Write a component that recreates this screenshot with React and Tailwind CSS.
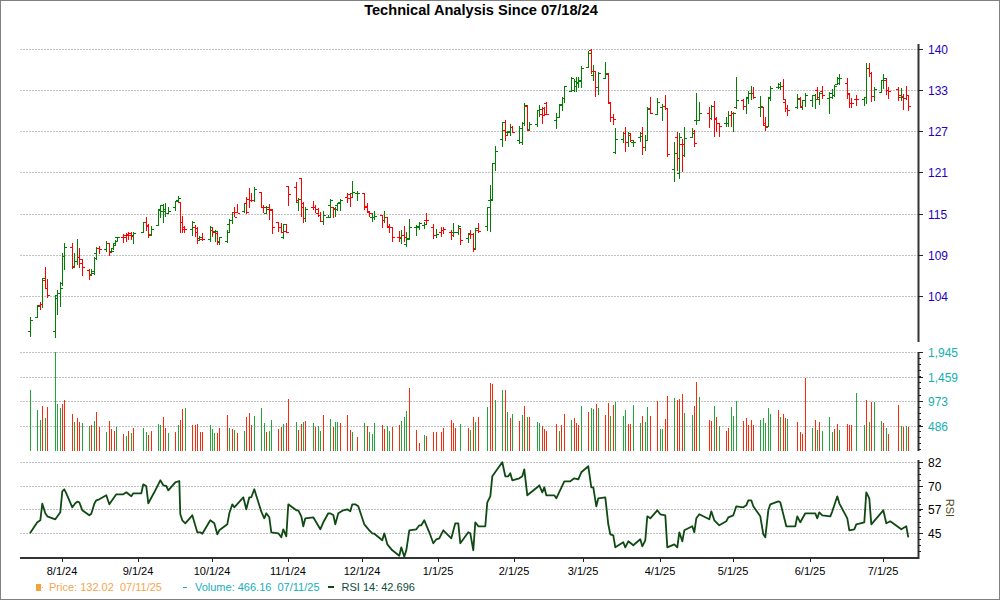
const priceA = [
  [91,952,1010,994,961,'g'],[112,915,950,950,918,'g'],[121,905,930,915,912,'r'],[127,835,924,912,835,'g'],[136,802,868,840,865,'r'],[142,838,895,865,884,'r'],
  [166,885,1013,994,885,'g'],[172,870,945,895,880,'g'],[181,845,922,880,865,'g'],[187,758,858,850,768,'g'],[193,728,810,768,742,'g'],
  [217,728,808,742,800,'r'],[223,760,805,798,782,'g'],[232,718,795,782,772,'g'],[238,745,805,772,788,'r'],[247,778,827,778,802,'r'],
  [268,808,840,810,825,'r'],[274,808,828,822,812,'g'],[283,770,825,820,775,'g'],[289,742,780,760,745,'g'],[298,738,762,745,748,'r'],
  [319,722,755,748,730,'g'],[328,728,768,730,755,'r'],[334,748,760,752,752,'g'],[340,733,750,745,735,'g'],[346,720,738,728,722,'g'],[352,710,725,712,712,'g'],
  [370,702,728,712,712,'r'],[379,700,725,706,705,'r'],[385,697,720,702,700,'r'],[394,695,720,706,708,'r'],[400,695,732,706,700,'g'],
  [430,665,697,697,665,'g'],[439,650,692,665,678,'r'],[445,672,715,675,703,'r'],[454,678,708,705,686,'g'],
  [475,628,678,674,630,'g'],[481,615,653,628,615,'g'],[490,612,668,632,628,'g'],[496,610,650,632,640,'g'],[505,620,640,640,632,'g'],
  [526,603,632,620,603,'g'],[535,587,610,600,595,'g'],[541,605,700,605,665,'r'],[547,648,700,665,680,'r'],[553,678,700,688,688,'r'],
  [577,663,708,688,665,'g'],[586,675,712,680,685,'r'],[592,680,732,695,715,'r'],[598,708,722,720,710,'g'],[607,698,722,718,718,'r'],
  [631,678,725,716,680,'g'],[637,680,710,690,695,'r'],[646,690,725,692,692,'g'],[652,695,735,700,725,'r'],[658,710,735,722,712,'g'],
  [682,690,730,722,695,'g'],[688,658,695,672,660,'g'],[697,635,672,660,635,'g'],[703,622,652,635,650,'r'],[712,612,640,635,638,'r'],
  [733,608,640,632,610,'g'],[739,590,642,610,636,'r'],[748,565,625,598,600,'r'],[754,578,605,600,600,'r'],[763,560,605,600,568,'g'],
  [784,577,625,577,622,'r'],[790,615,640,620,622,'r'],[799,618,640,638,620,'g'],[808,612,660,628,628,'r'],[815,628,702,630,680,'r'],
  [835,665,695,666,680,'r'],[844,670,700,680,697,'r'],[850,672,716,712,672,'g'],[859,672,700,692,697,'r'],
  [865,558,618,558,582,'r'],[889,545,605,562,600,'r'],[895,595,632,605,598,'g'],[904,535,650,535,622,'r'],[910,605,670,610,655,'r'],[916,620,665,655,628,'g'],
  [940,602,630,620,622,'r'],[946,615,638,622,628,'r'],[955,625,650,640,645,'r'],[961,635,665,645,662,'r'],[970,632,675,662,645,'g'],[985,645,652,650,650,'g'],
]
const priceB = [
  [0,598,652,615,600,'g'],[10,622,655,622,625,'r'],[16,620,650,628,628,'g'],[22,608,632,615,610,'g'],[31,598,632,605,600,'g'],
  [52,580,608,592,582,'r'],[61,578,620,595,590,'r'],[67,543,590,578,575,'g'],[82,572,602,580,578,'g'],
  [103,580,630,580,622,'r'],[112,610,640,618,632,'r'],[118,632,650,635,640,'r'],[127,638,665,652,652,'g'],[133,632,660,650,648,'g'],
  [157,645,685,645,660,'r'],[163,632,668,660,650,'g'],[172,650,685,652,678,'r'],[178,672,698,680,682,'r'],[187,680,725,682,712,'r'],
  [208,692,725,712,712,'r'],[214,690,732,715,705,'g'],[223,678,725,705,712,'r'],[229,695,742,732,718,'g'],[238,658,720,715,680,'g'],
  [259,675,708,680,678,'g'],[268,665,690,680,668,'g'],[283,665,688,675,672,'g'],[289,640,672,660,660,'r'],
  [310,672,718,680,705,'r'],[319,688,715,705,702,'g'],[334,682,712,695,690,'r'],[340,680,702,690,688,'r'],
  [364,690,720,695,705,'r'],[370,668,712,695,695,'g'],[385,675,705,695,678,'g'],[391,685,735,685,720,'r'],
  [415,698,728,715,700,'g'],[421,690,718,702,703,'r'],[430,700,755,703,748,'r'],[436,685,748,745,685,'g'],[445,668,698,690,692,'r'],
  [472,620,692,678,622,'g'],[481,555,695,600,598,'g'],[487,490,600,600,490,'g'],[496,438,512,490,452,'g'],
  [517,365,442,418,365,'g'],[526,360,422,390,405,'r'],[532,392,408,395,392,'g'],[541,372,408,395,380,'g'],[547,378,400,382,396,'r'],
  [568,378,432,420,385,'g'],[577,365,435,425,370,'g'],[583,308,378,370,315,'g'],[592,316,392,318,390,'r'],[598,365,390,388,372,'g'],
  [622,330,382,372,330,'g'],[628,315,350,330,328,'g'],[637,320,372,342,345,'r'],[643,320,345,325,343,'r'],[649,305,345,310,343,'r'],
  [679,340,388,360,350,'g'],[688,312,355,350,315,'g'],[697,292,332,312,295,'g'],[703,258,310,295,258,'g'],
  [724,232,275,272,235,'g'],[733,238,275,270,242,'g'],[739,232,275,258,245,'g'],[745,230,265,250,242,'g'],[754,198,265,240,205,'g'],
  [775,152,205,202,160,'g'],[784,148,222,150,212,'r'],[790,195,242,225,212,'g'],[796,212,290,212,260,'r'],[805,215,285,260,218,'g'],
  [826,185,235,235,218,'g'],[835,220,310,222,305,'r'],[841,305,365,308,350,'r'],[850,342,375,350,358,'r'],
  [856,385,462,455,418,'g'],[880,395,430,418,398,'g'],[886,382,455,400,425,'r'],[895,395,440,425,400,'g'],[901,398,425,405,420,'r'],[910,420,442,426,426,'g'],
  [931,395,425,410,408,'g'],[937,380,465,398,440,'r'],[946,405,452,440,420,'g'],[952,320,420,420,325,'g'],[961,290,342,328,340,'r'],[982,295,345,342,305,'g'],
]
const priceC = [
  [7,312,362,320,318,'g'],[16,285,330,318,325,'r'],[22,325,472,325,463,'r'],
  [43,425,545,508,458,'g'],[52,395,512,412,475,'r'],[58,400,538,520,412,'g'],[67,418,515,432,432,'r'],[73,382,472,465,415,'g'],
  [97,385,415,412,398,'g'],[103,390,442,392,430,'r'],[109,278,375,360,360,'g'],[118,305,362,360,338,'g'],
  [148,320,385,338,355,'r'],[154,315,360,355,318,'g'],[163,302,412,318,355,'r'],[169,352,395,358,368,'r'],[178,368,410,370,378,'r'],
  [199,352,382,368,370,'g'],[205,332,380,370,345,'g'],[214,332,382,345,338,'r'],[220,335,395,340,338,'g'],[229,230,328,320,300,'g'],
  [250,298,330,300,318,'r'],[259,290,342,318,290,'g'],[265,272,312,295,280,'g'],[274,258,300,280,280,'g'],[280,262,296,280,292,'r'],
  [301,288,352,320,318,'g'],[310,320,378,322,370,'r'],[316,352,392,375,382,'r'],[325,290,378,378,292,'g'],[331,258,302,295,265,'g'],
  [355,248,268,262,262,'g'],[361,245,270,252,258,'g'],[370,238,300,258,298,'r'],[376,300,335,305,325,'r'],[382,315,348,325,330,'r'],
  [412,282,328,320,298,'g'],[421,290,325,295,318,'r'],[427,300,330,322,300,'g'],[436,280,322,300,285,'g'],
  [457,285,322,300,285,'g'],[466,282,328,285,298,'g'],[472,262,298,270,298,'r'],[478,275,315,290,278,'g'],[487,258,298,272,285,'r'],
  [508,275,342,295,280,'g'],[517,268,298,290,285,'g'],[523,255,290,285,258,'g'],[532,230,255,252,235,'g'],[538,222,255,250,235,'g'],
  [562,235,298,250,280,'r'],[568,280,325,282,310,'r'],[574,295,325,310,310,'r'],[589,285,318,298,298,'r'],
  [613,290,318,298,292,'g'],[619,188,312,292,205,'g'],[628,190,230,205,218,'r'],[634,215,305,218,288,'r'],[643,262,302,288,268,'g'],
  [664,240,278,275,240,'g'],[670,222,268,240,235,'g'],[679,235,285,240,270,'r'],[685,260,298,270,272,'r'],
  [715,262,302,268,285,'r'],[724,265,302,292,290,'g'],[730,282,330,288,295,'r'],[739,258,300,295,285,'r'],[745,285,332,285,317,'r'],
]

const volA = [[91,136,'g'],[112,196,'g'],[121,226,'g'],[127,184,'r'],[136,220,'g'],[142,187,'r'],[166,22,'g'],[172,178,'g'],[181,190,'g'],[187,178,'r'],[193,166,'r'],[217,208,'r'],[223,232,'g'],[232,220,'r'],[238,232,'r'],[247,235,'g'],[268,244,'g'],[274,241,'r'],[283,229,'g'],[289,202,'r'],[298,247,'r'],[319,262,'g'],[328,229,'r'],[334,253,'r'],[343,259,'r'],[349,247,'g'],[370,268,'r'],[379,274,'g'],[385,259,'r'],[394,265,'g'],[400,250,'r'],[430,250,'g'],[439,262,'g'],[445,271,'r'],[454,259,'r'],[475,238,'g'],[481,241,'g'],[490,217,'r'],[496,250,'r'],[505,265,'g'],[526,262,'r'],[535,241,'g'],[541,226,'r'],[547,193,'r'],[556,190,'g'],[577,241,'r'],[586,241,'r'],[592,238,'r'],[601,262,'r'],[607,262,'r'],[631,241,'g'],[637,253,'g'],[643,265,'g'],[652,265,'r'],[658,250,'r'],[682,211,'r'],[688,250,'g'],[697,253,'r'],[703,256,'g'],[712,265,'r'],[733,259,'g'],[739,217,'r'],[748,205,'r'],[754,241,'r'],[763,214,'g'],[784,190,'g'],[793,235,'g'],[799,262,'r'],[808,259,'g'],[814,226,'g'],[835,253,'r'],[844,247,'r'],[850,238,'g'],[859,235,'r'],[865,163,'r'],[889,232,'g'],[895,256,'r'],[904,238,'r'],[910,232,'g'],[916,229,'r'],[940,235,'g'],[946,247,'r'],[955,244,'g'],[961,259,'g'],[970,211,'r']]
const volB = [[0,223,'g'],[10,247,'r'],[16,232,'g'],[22,232,'g'],[31,235,'r'],[52,211,'r'],[61,256,'r'],[67,262,'g'],[82,277,'r'],[103,235,'g'],[112,244,'r'],[118,262,'g'],[127,268,'g'],[133,235,'g'],[157,241,'r'],[163,253,'r'],[172,244,'g'],[178,259,'g'],[187,247,'r'],[208,241,'r'],[214,229,'g'],[223,217,'g'],[229,199,'g'],[238,130,'r'],[259,256,'r'],[268,295,'r'],[283,271,'g'],[289,274,'r'],[310,262,'r'],[319,262,'r'],[334,262,'r'],[340,250,'r'],[364,226,'r'],[370,235,'r'],[376,250,'r'],[391,238,'g'],[415,250,'r'],[421,256,'g'],[430,217,'r'],[436,232,'g'],[445,217,'r'],[472,187,'g'],[481,115,'r'],[487,118,'r'],[496,166,'g'],[517,136,'g'],[526,136,'r'],[532,202,'g'],[541,220,'r'],[547,208,'g'],[568,229,'r'],[577,211,'g'],[583,184,'r'],[592,217,'g'],[598,217,'r'],[622,232,'g'],[628,235,'g'],[637,244,'r'],[643,253,'r'],[649,259,'r'],[679,238,'r'],[688,259,'g'],[694,241,'r'],[703,208,'r'],[724,226,'g'],[733,220,'r'],[739,235,'r'],[745,241,'r'],[754,184,'g'],[775,202,'r'],[784,190,'g'],[790,193,'g'],[799,178,'r'],[805,190,'g'],[826,211,'r'],[835,175,'r'],[841,214,'g'],[850,181,'r'],[856,172,'g'],[880,214,'g'],[886,196,'g'],[895,238,'r'],[901,238,'r'],[910,181,'g'],[931,235,'g'],[937,214,'r'],[946,232,'g'],[952,187,'g'],[961,214,'r'],[982,169,'r']]
const volC = [[1,253,'g'],[7,253,'g'],[16,223,'r'],[22,154,'r'],[43,160,'g'],[52,166,'r'],[58,163,'r'],[67,148,'r'],[73,205,'g'],[97,211,'g'],[103,184,'r'],[109,112,'r'],[118,157,'g'],[148,226,'r'],[154,229,'r'],[163,184,'g'],[169,217,'r'],[178,244,'g'],[199,259,'r'],[205,250,'r'],[214,187,'g'],[220,214,'g'],[229,169,'g'],[250,229,'r'],[259,220,'r'],[265,241,'r'],[274,226,'r'],[280,241,'r'],[301,226,'g'],[310,220,'g'],[316,235,'g'],[325,190,'g'],[331,208,'g'],[355,196,'r'],[361,217,'g'],[370,208,'r'],[376,220,'r'],[382,223,'g'],[412,232,'r'],[421,262,'r'],[427,268,'r'],[436,100,'r'],[457,250,'g'],[466,226,'r'],[472,256,'g'],[478,232,'r'],[487,259,'g'],[508,217,'g'],[517,262,'g'],[523,253,'r'],[532,238,'r'],[538,256,'g'],[562,238,'r'],[568,241,'r'],[574,241,'r'],[589,145,'g'],[613,241,'g'],[619,166,'r'],[628,232,'g'],[634,172,'r'],[643,172,'g'],[664,229,'g'],[670,235,'r'],[679,250,'g'],[685,268,'r'],[715,181,'r'],[724,244,'g'],[730,247,'r'],[739,244,'g'],[745,247,'r']]

const rsiA = [[90,565],[112,532],[121,526],[127,476],[136,505],[142,514],[166,523],[181,502],[187,439],[193,433],[199,445],[217,487],[226,475],[232,470],[238,472],[247,496],[268,511],[274,506],[283,476],[289,466],[298,463],[319,451],[328,478],[349,448],[370,448],[379,442],[394,454],[400,445],[424,445],[430,418],[439,424],[445,475],[463,442],[481,406],[490,421],[499,423],[505,436],[526,412],[538,408],[541,508],[547,526],[556,535],[577,511],[592,562],[601,562],[607,566],[631,526],[643,535],[652,568],[658,556],[682,538],[688,505],[697,478],[703,487],[730,457],[739,493],[748,457],[754,457],[763,433],[784,500],[793,520],[799,505],[808,517],[814,562],[835,565],[844,577],[850,553],[859,574],[865,478],[889,496],[895,496],[904,514],[910,544],[916,520],[940,517],[961,553],[970,532],[985,505]]
const rsiB = [[0,505],[10,510],[16,538],[25,505],[40,496],[52,493],[61,499],[67,478],[76,478],[85,484],[103,538],[118,556],[127,565],[133,566],[157,586],[163,565],[172,598],[187,616],[208,632],[214,607],[223,635],[229,616],[238,556],[259,553],[268,541],[274,541],[283,526],[298,562],[310,595],[319,583],[328,580],[340,556],[364,580],[376,535],[385,535],[391,595],[415,562],[421,565],[430,616],[436,532],[445,544],[466,544],[472,472],[481,454],[487,394],[496,381],[517,352],[526,394],[535,394],[541,385],[547,406],[568,400],[577,394],[583,373],[592,451],[622,427],[628,421],[637,442],[643,427],[649,451],[673,451],[679,460],[703,409],[721,409],[733,400],[745,403],[754,382],[775,364],[784,427],[790,427],[799,484],[805,460],[826,457],[835,538],[841,568],[850,571],[856,607],[880,592],[886,607],[895,589],[910,601],[931,583],[937,604],[946,586],[952,514],[961,520],[982,496]]
const rsiC = [[1,508],[16,511],[22,607],[43,598],[52,607],[58,562],[67,589],[73,556],[97,544],[103,562],[109,520],[118,508],[148,523],[154,499],[163,526],[178,541],[199,529],[205,517],[220,511],[229,484],[250,487],[259,481],[265,466],[274,466],[280,484],[301,514],[310,568],[316,577],[325,496],[331,478],[355,469],[361,472],[379,544],[406,544],[412,514],[421,532],[436,505],[466,505],[472,520],[478,502],[487,511],[511,514],[517,499],[532,454],[538,475],[562,520],[568,556],[583,553],[589,538],[613,532],[619,442],[628,460],[634,538],[670,496],[679,535],[691,529],[724,553],[739,544],[745,577]]

// values above were read off 3x crops, so scale back to page pixels
const px = (off, x) => Math.round(off + x / 3) + 0.5
const bars = [[0, priceA], [330, priceB], [660, priceC]].flatMap(([off, rows]) =>
  rows.map(([x, hi, lo, o, c, col]) => ({
    x: px(off, x), hi: hi / 3, lo: lo / 3, o: Math.round(o / 3) + 0.5, c: Math.round(c / 3) + 0.5, col,
  }))
)
const barPath = (col) =>
  bars.filter((b) => b.col === col)
    .map((b) => `M${b.x} ${b.hi}V${b.lo}M${b.x - 2.5} ${b.o}H${b.x}M${b.x} ${b.c}H${b.x + 2.5}`)
    .join('')

const vols = [[0, volA], [330, volB], [660, volC]].flatMap(([off, rows]) =>
  rows.map(([x, top, col]) => ({ x: px(off, x), top: 345 + top / 3, col }))
)
const volPath = (col) =>
  vols.filter((v) => v.col === col).map((v) => `M${v.x} ${v.top}V451`).join('')

const rsiLine = [[0, rsiA], [330, rsiB], [660, rsiC]]
  .flatMap(([off, rows]) => rows.map(([x, y]) => `${(off + x / 3).toFixed(1)},${(345 + y / 3).toFixed(1)}`))
  .join(' ')

const priceAxis = [[140, 49.5], [133, 90.5], [127, 131.5], [121, 172.5], [115, 214.5], [109, 255.5], [104, 296.5]]
const volAxis = [['1,945', 352.5], ['1,459', 377.5], ['973', 401.5], ['486', 426.5]]
const rsiAxis = [[82, 462.5], [70, 486.5], [57, 509.5], [45, 533.5]]
const dates = [['8/1/24', 62], ['9/1/24', 138], ['10/1/24', 212], ['11/1/24', 288], ['12/1/24', 362], ['1/1/25', 438], ['2/1/25', 514], ['3/1/25', 583], ['4/1/25', 660], ['5/1/25', 733], ['6/1/25', 810], ['7/1/25', 883]]

const minorTicks = (start, step, n) =>
  Array.from({ length: n }, (_, i) => `M918 ${Math.round(start + step * i) + 0.5}H921`).join('')

function Chart() {
  const grid = [...priceAxis, ...volAxis, ...rsiAxis].map(([, y]) => `M20 ${y}H918`).join('')
  const majorTicks = [...priceAxis, ...volAxis, ...rsiAxis].map(([, y]) => `M918 ${y}H923`).join('')
  const dateTicks = dates.map(([, x]) => `M${x + 0.5} 558V562`).join('')

  return (
    <svg viewBox="1 19 998 559" className="block w-[998px] h-[559px] shrink-0">
      <path d={grid} fill="none" stroke="#c2c2c2" strokeDasharray="2 1" shapeRendering="crispEdges" />

      <path d={barPath('g')} fill="none" stroke="#008000" shapeRendering="crispEdges" />
      <path d={barPath('r')} fill="none" stroke="#ff0000" shapeRendering="crispEdges" />

      <path d={volPath('g')} fill="none" stroke="#22a83a" shapeRendering="crispEdges" />
      <path d={volPath('r')} fill="none" stroke="#fa2a0a" shapeRendering="crispEdges" />

      <polyline points={rsiLine} fill="none" stroke="#0f4a12" strokeWidth="1.8" strokeLinejoin="round" />

      {/* axes */}
      <path d="M918.5 44V342M918.5 352V451M918.5 460V558M20 558H919.5" fill="none" stroke="#333333" strokeWidth="2" />
      <path d={majorTicks + dateTicks} fill="none" stroke="#222222" shapeRendering="crispEdges" />
      <path d={minorTicks(352, 6.08, 17) + minorTicks(462, 5.95, 16)} fill="none" stroke="#222222" shapeRendering="crispEdges" />

      {priceAxis.map(([v, y]) => (
        <text key={v} x="928" y={y + 4} className="fill-[#1f00c4] text-[12px]">{v}</text>
      ))}
      {volAxis.map(([v, y]) => (
        <text key={v} x="928" y={y + 4} className="fill-[#14b0b0] text-[12px]">{v}</text>
      ))}
      {rsiAxis.map(([v, y]) => (
        <text key={v} x="928" y={y + 4} className="fill-black text-[12px]">{v}</text>
      ))}
      {dates.map(([d, x]) => (
        <text key={d} x={x} y="575" textAnchor="middle" className="fill-black text-[11px]">{d}</text>
      ))}
      <text x="946" y="508" textAnchor="middle" transform="rotate(90 946 508)" className="fill-[#4d4a1c] text-[11px]">RSI</text>
    </svg>
  )
}

function Legend() {
  return (
    <div className="flex items-center h-[20px] pb-[2px] pl-[35px] text-[11px] whitespace-pre">
      <span className="w-[5px] h-[7px] bg-[#f7a13c]" />
      <span className="w-[1px] h-[1px] ml-[1px] bg-[#f7a13c]" />
      <span className="ml-[6px] text-[#f8a552]">{'Price: 132.02  07/11/25'}</span>
      <span className="w-[4px] h-[1px] ml-[21px] bg-[#14aebb]" />
      <span className="ml-[8px] text-[#14aebb]">{'Volume: 466.16  07/11/25'}</span>
      <span className="w-[6px] h-[2px] ml-[8px] bg-[#0f4a12]" />
      <span className="ml-[8px] text-[#0e4a3c]">RSI 14: 42.696</span>
    </div>
  )
}

export default function App() {
  return (
    <div className="w-[1000px] h-[600px] border border-[#808080] bg-white overflow-hidden flex flex-col font-['Liberation_Sans',Arial,sans-serif]">
      <h1 className="h-[18px] shrink-0 pr-[38px] text-center text-[14.6px] leading-[18px] font-bold text-black">
        Technical Analysis Since 07/18/24
      </h1>
      <Chart />
      <Legend />
    </div>
  )
}
